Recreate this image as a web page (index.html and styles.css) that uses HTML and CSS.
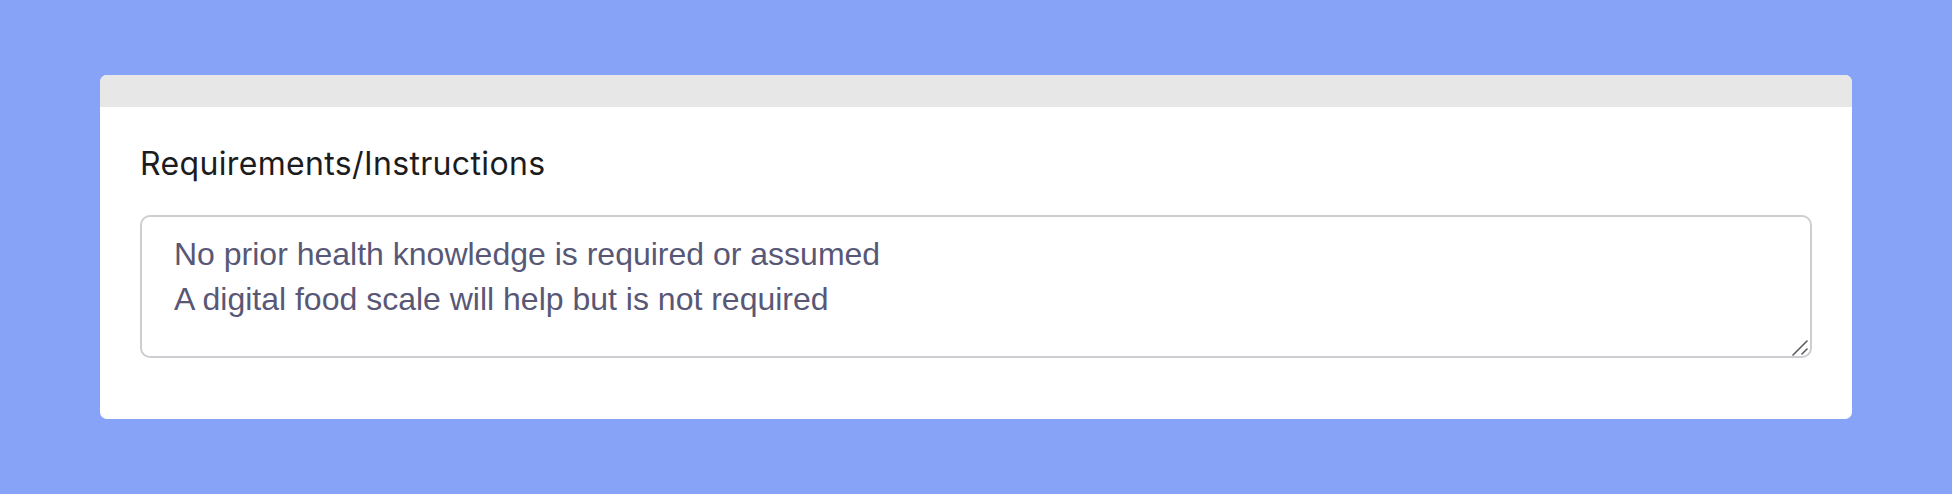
FILE: index.html
```html
<!DOCTYPE html>
<html lang="en">
<head>
    <meta charset="UTF-8">
    <title>Requirements</title>
    <link rel="stylesheet" href="styles.css">
</head>
<body>
    <div class="card">
        <div class="card-header"></div>
        <div class="card-body">
            <label class="field-label" for="requirements">Requirements/Instructions</label>
            <div class="field-wrap">
                <textarea id="requirements" class="field-input">No prior health knowledge is required or assumed
A digital food scale will help but is not required</textarea>
                <svg class="grip" width="16" height="16" viewBox="0 0 16 16">
                    <line x1="1" y1="15" x2="15" y2="1" />
                    <line x1="10" y1="14" x2="15" y2="9" />
                </svg>
            </div>
        </div>
    </div>
</body>
</html>
```

FILE: styles.css
```css
html, body {
    margin: 0;
    padding: 0;
}
body {
    background-color: #87a3f8;
    padding: 75px 100px;
    font-family: "Inter", "Liberation Sans", sans-serif;
}
.card {
    background-color: #fff;
    border-radius: 7px;
    overflow: hidden;
}
.card-header {
    height: 32px;
    background-color: #e7e7e7;
}
.card-body {
    padding: 41px 40px 61px;
}
.field-label {
    display: block;
    font-size: 32px;
    line-height: 32px;
    letter-spacing: 0.35px;
    color: #1c1c20;
    margin-bottom: 35px;
}
.field-wrap {
    position: relative;
}
.field-input {
    display: block;
    box-sizing: border-box;
    width: 100%;
    height: 143px;
    margin: 0;
    padding: 15px 32px;
    border: 2px solid #cdcdd2;
    border-radius: 10px;
    font-family: "Liberation Sans", Arial, sans-serif;
    font-size: 32px;
    line-height: 45px;
    color: #585876;
    background-color: #fff;
    outline: none;
    resize: none;
}
.grip {
    position: absolute;
    right: 4px;
    bottom: 2px;
    stroke: #5a5a5a;
    stroke-width: 1.6;
    stroke-linecap: round;
    pointer-events: none;
}
```
